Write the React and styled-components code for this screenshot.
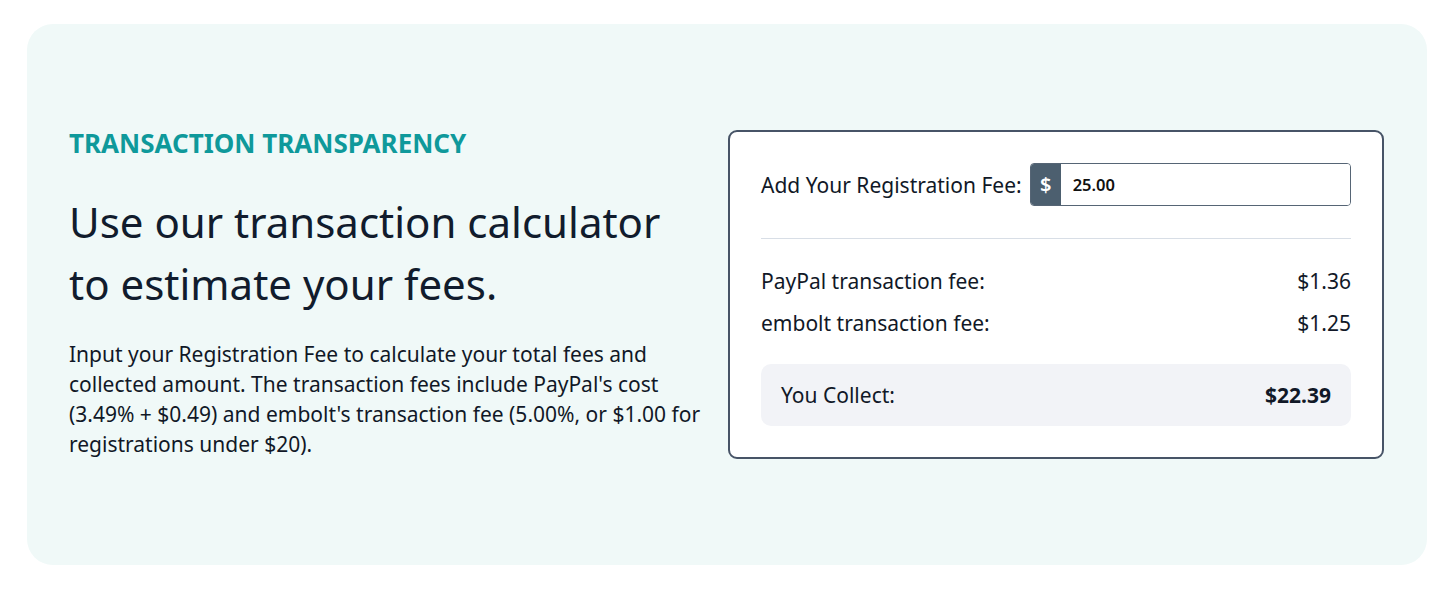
import React, { useState } from "react";
import styled, { createGlobalStyle } from "styled-components";

const GlobalStyle = createGlobalStyle`
  html, body {
    margin: 0;
    padding: 0;
    background: #ffffff;
  }
  body {
    font-family: "Noto Sans", "Open Sans", sans-serif;
    color: #0f1b2d;
  }
  * {
    box-sizing: border-box;
  }
`;

const PAYPAL_RATE = 0.0349;
const PAYPAL_FLAT = 0.49;
const EMBOLT_RATE = 0.05;
const EMBOLT_MIN = 1.0;

const money = (n) => `$${n.toFixed(2)}`;

const App = () => {
  const [fee, setFee] = useState("25.00");

  const amount = parseFloat(fee) || 0;
  const paypalFee = amount > 0 ? amount * PAYPAL_RATE + PAYPAL_FLAT : 0;
  const emboltFee = amount <= 0 ? 0 : amount < 20 ? EMBOLT_MIN : amount * EMBOLT_RATE;
  const collect = Math.max(amount - paypalFee - emboltFee, 0);

  return (
    <>
      <GlobalStyle />
      <Page>
        <Card>
          <Intro>
            <Eyebrow>Transaction Transparency</Eyebrow>
            <Title>Use our transaction calculator to estimate your fees.</Title>
            <Blurb>
              Input your Registration Fee to calculate your total fees and
              collected amount. The transaction fees include PayPal's cost
              (3.49% + $0.49) and embolt's transaction fee (5.00%, or $1.00 for
              registrations under $20).
            </Blurb>
          </Intro>

          <Calculator>
            <FeeRow>
              <FeeLabel htmlFor="reg-fee">Add Your Registration Fee:</FeeLabel>
              <InputGroup>
                <Addon>$</Addon>
                <FeeInput
                  id="reg-fee"
                  value={fee}
                  onChange={(e) => setFee(e.target.value)}
                />
              </InputGroup>
            </FeeRow>

            <Divider />

            <Breakdown>
              <LineItem>
                <span>PayPal transaction fee:</span>
                <span>{money(paypalFee)}</span>
              </LineItem>
              <LineItem>
                <span>embolt transaction fee:</span>
                <span>{money(emboltFee)}</span>
              </LineItem>
            </Breakdown>

            <Total>
              <span>You Collect:</span>
              <strong>{money(collect)}</strong>
            </Total>
          </Calculator>
        </Card>
      </Page>
    </>
  );
};

const Page = styled.div`
  padding: 24px 0 24px 27px;
`;

const Card = styled.section`
  width: 1400px;
  height: 541px;
  padding: 0 43px 0 42px;
  background: #f0f9f8;
  border-radius: 26px;
  display: grid;
  grid-template-columns: 1fr 656px;
  column-gap: 22px;
  align-items: center;
`;

const Intro = styled.div`
  display: flex;
  flex-direction: column;
  padding-bottom: 3px;
`;

const Eyebrow = styled.h3`
  margin: 0 0 32px;
  font-size: 26px;
  line-height: 32px;
  font-weight: 700;
  text-transform: uppercase;
  color: #0f999b;
`;

const Title = styled.h2`
  margin: 0 0 24px;
  max-width: 600px;
  font-size: 42px;
  line-height: 62px;
  font-weight: 400;
  color: #111c2d;
`;

const Blurb = styled.p`
  margin: 0;
  font-size: 21px;
  line-height: 30px;
  color: #111827;
`;

const Calculator = styled.div`
  background: #ffffff;
  border: 2px solid #475467;
  border-radius: 9px;
  padding: 31px;
  display: flex;
  flex-direction: column;
`;

const FeeRow = styled.div`
  display: flex;
  align-items: center;
  gap: 8px;
`;

const FeeLabel = styled.label`
  font-size: 21px;
  color: #111827;
  white-space: nowrap;
`;

const InputGroup = styled.div`
  flex: 1;
  display: flex;
  height: 43px;
  border: 1px solid #566575;
  border-radius: 4px;
  overflow: hidden;
`;

const Addon = styled.span`
  width: 30px;
  display: flex;
  align-items: center;
  justify-content: center;
  background: #4c5f6f;
  color: #ffffff;
  font-size: 20px;
  font-weight: 600;
`;

const FeeInput = styled.input`
  flex: 1;
  min-width: 0;
  border: 0;
  outline: none;
  padding: 0 12px;
  font-family: inherit;
  font-size: 16.5px;
  font-weight: 600;
  color: #111111;
  background: #ffffff;
`;

const Divider = styled.hr`
  margin: 32px 0 28px;
  border: 0;
  border-top: 1px solid #d8dee6;
`;

const Breakdown = styled.div`
  display: flex;
  flex-direction: column;
  gap: 14px;
  margin-bottom: 27px;
`;

const LineItem = styled.div`
  display: flex;
  justify-content: space-between;
  font-size: 21px;
  line-height: 28px;
  color: #111827;
`;

const Total = styled.div`
  display: flex;
  justify-content: space-between;
  align-items: center;
  padding: 17px 20px;
  background: #f2f3f7;
  border-radius: 10px;
  font-size: 21px;
  line-height: 28px;
  color: #111827;

  strong {
    font-weight: 700;
  }
`;

export default App;
